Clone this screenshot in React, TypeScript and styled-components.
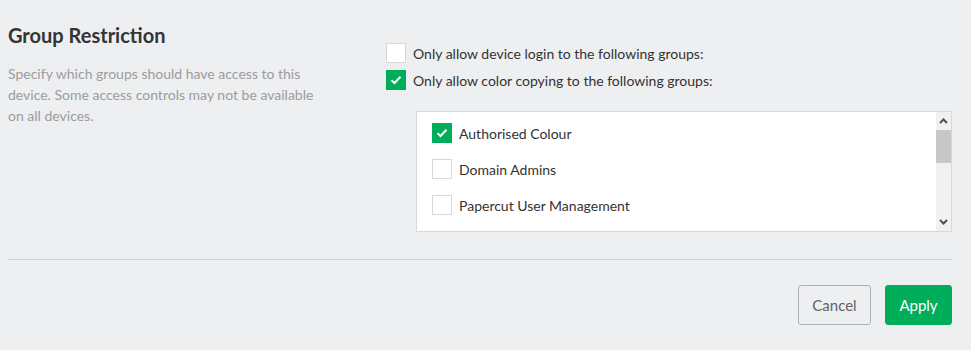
import React from 'react';
import styled, { createGlobalStyle } from 'styled-components';

const GlobalStyle = createGlobalStyle`
  html, body {
    margin: 0;
    padding: 0;
    background: #eeeff1;
  }
  body {
    font-family: Lato, 'Open Sans', sans-serif;
    color: #333;
  }
`;

const Page = styled.div`
  width: 971px;
  height: 350px;
  padding: 0 19px 0 8px;
  box-sizing: border-box;
  overflow: hidden;
`;

const Section = styled.div`
  display: grid;
  grid-template-columns: 378px 1fr;
  padding-top: 22px;
  height: 237px;
  box-sizing: border-box;
`;

const Title = styled.h2`
  margin: 0 0 15px;
  font-size: 20px;
  font-weight: 700;
  line-height: 26px;
  color: #333436;
`;

const Description = styled.p`
  margin: 0;
  max-width: 322px;
  font-size: 14px;
  line-height: 21px;
  color: #9a9c9f;
`;

const Options = styled.div`
  display: flex;
  flex-direction: column;
  padding-top: 21px;
`;

const OptionRow = styled.label`
  display: flex;
  align-items: center;
  gap: 7px;
  height: 20px;
  margin-bottom: 7px;
  font-size: 14px;
  color: #333;
`;

const Box = styled.span<{ checked?: boolean }>`
  flex: none;
  width: 20px;
  height: 20px;
  box-sizing: border-box;
  border: 1px solid ${p => (p.checked ? '#00ad5b' : '#d6d9dc')};
  background: ${p => (p.checked ? '#00ad5b' : '#fff')};
  display: flex;
  align-items: center;
  justify-content: center;
`;

const GroupList = styled.div`
  margin: 14px 0 0 30px;
  height: 121px;
  box-sizing: border-box;
  border: 1px solid #d6d9dc;
  background: #fff;
  display: flex;
`;

const Items = styled.div`
  flex: 1;
  padding: 11px 0 0 15px;
`;

const GroupRow = styled.label`
  display: flex;
  align-items: center;
  gap: 7px;
  height: 20px;
  margin-bottom: 16px;
  font-size: 14px;
  color: #333;
`;

const ScrollBar = styled.div`
  flex: none;
  width: 15px;
  background: #f1f1f1;
  display: flex;
  flex-direction: column;
`;

const ScrollArrow = styled.div`
  height: 18px;
  display: flex;
  align-items: center;
  justify-content: center;
`;

const ScrollThumb = styled.div`
  height: 33px;
  background: #c8c8c8;
`;

const ScrollTrack = styled.div`
  flex: 1;
`;

const Divider = styled.hr`
  margin: 22px 0 0;
  border: none;
  border-top: 1px solid #d4d5d7;
`;

const Footer = styled.div`
  display: flex;
  justify-content: flex-end;
  gap: 14px;
  padding-top: 25px;
`;

const Button = styled.button<{ primary?: boolean }>`
  height: 40px;
  width: ${p => (p.primary ? '67px' : '73px')};
  padding: 0;
  border-radius: 3px;
  font-family: inherit;
  font-size: 15px;
  cursor: pointer;
  border: 1px solid ${p => (p.primary ? '#00ad5b' : '#aeb3b6')};
  background: ${p => (p.primary ? '#00ad5b' : 'transparent')};
  color: ${p => (p.primary ? '#fff' : '#5f6366')};
`;

const Check = () => (
  <svg width="12" height="10" viewBox="0 0 12 10">
    <path d="M1.5 5.2 L4.5 8 L10.5 1.8" fill="none" stroke="#fff" strokeWidth="2" />
  </svg>
);

const Chevron: React.FC<{ down?: boolean }> = ({ down }) => (
  <svg width="9" height="6" viewBox="0 0 9 6">
    <path
      d={down ? 'M1 1 L4.5 4.5 L8 1' : 'M1 5 L4.5 1.5 L8 5'}
      fill="none"
      stroke="#505050"
      strokeWidth="2"
    />
  </svg>
);

const Checkbox: React.FC<{ checked?: boolean }> = ({ checked }) => (
  <Box checked={checked}>{checked && <Check />}</Box>
);

const groups = [
  { name: 'Authorised Colour', checked: true },
  { name: 'Domain Admins' },
  { name: 'Papercut User Management' },
];

export default function App() {
  return (
    <Page>
      <GlobalStyle />
      <Section>
        <div>
          <Title>Group Restriction</Title>
          <Description>
            Specify which groups should have access to this device. Some access controls may not be
            available on all devices.
          </Description>
        </div>
        <Options>
          <OptionRow>
            <Checkbox />
            Only allow device login to the following groups:
          </OptionRow>
          <OptionRow>
            <Checkbox checked />
            Only allow color copying to the following groups:
          </OptionRow>
          <GroupList>
            <Items>
              {groups.map(g => (
                <GroupRow key={g.name}>
                  <Checkbox checked={g.checked} />
                  {g.name}
                </GroupRow>
              ))}
            </Items>
            <ScrollBar>
              <ScrollArrow>
                <Chevron />
              </ScrollArrow>
              <ScrollThumb />
              <ScrollTrack />
              <ScrollArrow>
                <Chevron down />
              </ScrollArrow>
            </ScrollBar>
          </GroupList>
        </Options>
      </Section>
      <Divider />
      <Footer>
        <Button>Cancel</Button>
        <Button primary>Apply</Button>
      </Footer>
    </Page>
  );
}
